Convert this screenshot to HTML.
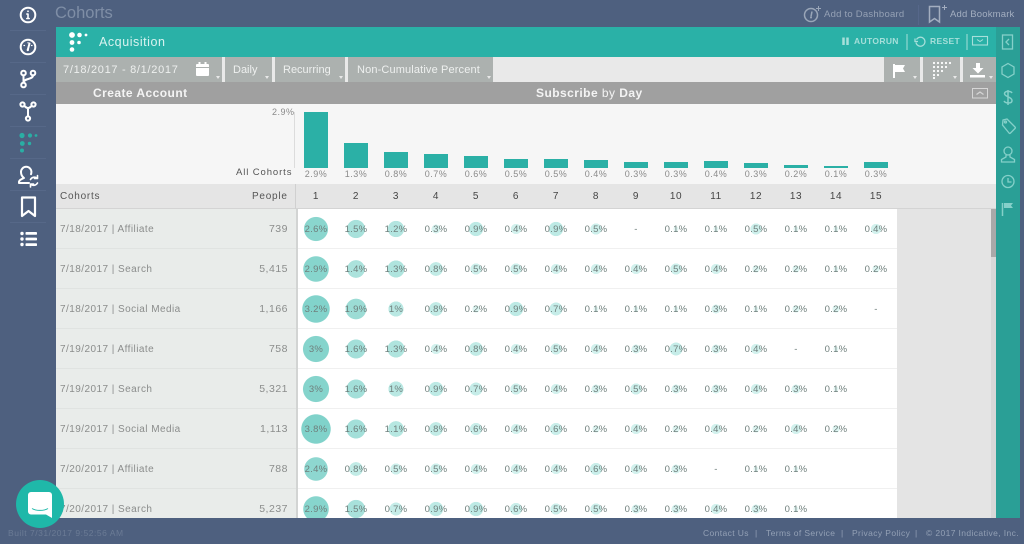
<!DOCTYPE html>
<html><head><meta charset="utf-8"><style>
html,body{margin:0;padding:0}
body{width:1024px;height:544px;overflow:hidden;background:#4e607f;font-family:"Liberation Sans",sans-serif;position:relative}
.a{position:absolute;white-space:nowrap}
svg{position:absolute;overflow:visible}
.sep{position:absolute;left:10px;width:36px;height:1px;background:#566888}
.tb{position:absolute;top:57px;height:25px;background:#acb1af;color:#eef0ef;font-size:11px;line-height:25px}
.tb span{margin-top:1px}
.car{position:absolute;width:0;height:0;border-left:2.5px solid transparent;border-right:2.5px solid transparent;border-top:3px solid #e8e8e8;top:76px}
.bar{position:absolute;width:24px;background:#2bb0a6;bottom:376px}
.bl{position:absolute;top:168px;width:40px;text-align:center;font-size:9px;line-height:12px;color:#8a8a8a;letter-spacing:.5px}
.hn{position:absolute;top:184px;width:40px;height:25px;line-height:25px;text-align:center;font-size:10px;color:#444;letter-spacing:.6px}
.row{position:absolute;left:56px;width:841px;height:40px;background:#fff}
.row b{position:absolute;left:0;top:0;width:240px;height:39px;background:#e9ecea;border-bottom:1px solid #e0e3e1;font-weight:400}
.row u{position:absolute;left:4px;top:0;line-height:41px;font-size:10px;color:#8b8d8c;letter-spacing:.45px;text-decoration:none}
.row s{position:absolute;right:609px;top:0;line-height:41px;font-size:10.5px;color:#8b8d8c;letter-spacing:.5px;text-decoration:none}
.row .l{position:absolute;left:240px;top:0;width:2px;height:40px;background:#d2d4d3}
.row .c{position:absolute;left:240px;top:0;display:flex;height:40px;width:601px;border-bottom:1px solid #f0f0f0;box-sizing:border-box}
.row i{display:block;flex:0 0 40px;height:39px;line-height:41px;text-align:center;font-style:normal;font-size:9.5px;color:#6f7f7c;letter-spacing:.3px;background-repeat:no-repeat}
.v38{background:radial-gradient(circle 15px at 20px 20px,#80d2ca 96%,transparent 100%)}
.v32{background:radial-gradient(circle 14px at 20px 20px,#82d3cb 96%,transparent 100%)}
.v30{background:radial-gradient(circle 13.3px at 20px 20px,#85d4cc 96%,transparent 100%)}
.v29{background:radial-gradient(circle 13px at 20px 20px,#87d5cd 96%,transparent 100%)}
.v26{background:radial-gradient(circle 12.3px at 20px 20px,#8ad6ce 96%,transparent 100%)}
.v24{background:radial-gradient(circle 12px at 20px 20px,#8ed7d0 96%,transparent 100%)}
.v19{background:radial-gradient(circle 10.5px at 20px 20px,#9cdcd5 96%,transparent 100%)}
.v16{background:radial-gradient(circle 9.7px at 20px 20px,#a3dfd9 96%,transparent 100%)}
.v15{background:radial-gradient(circle 9.3px at 20px 20px,#a8e1db 96%,transparent 100%)}
.v14{background:radial-gradient(circle 9px at 20px 20px,#abe2dc 96%,transparent 100%)}
.v13{background:radial-gradient(circle 8.7px at 20px 20px,#afe4de 96%,transparent 100%)}
.v12{background:radial-gradient(circle 8.3px at 20px 20px,#b3e5e0 96%,transparent 100%)}
.v11{background:radial-gradient(circle 8px at 20px 20px,#b6e7e1 96%,transparent 100%)}
.v10{background:radial-gradient(circle 7.7px at 20px 20px,#b9e8e3 96%,transparent 100%)}
.v9{background:radial-gradient(circle 7.3px at 20px 20px,#bdeae5 96%,transparent 100%)}
.v8{background:radial-gradient(circle 7px at 20px 20px,#c1ebe6 96%,transparent 100%)}
.v7{background:radial-gradient(circle 6.6px at 20px 20px,#c5ece8 96%,transparent 100%)}
.v6{background:radial-gradient(circle 6.2px at 20px 20px,#c9eeea 96%,transparent 100%)}
.v5{background:radial-gradient(circle 5.7px at 20px 20px,#cdefeb 96%,transparent 100%)}
.v4{background:radial-gradient(circle 5.2px at 20px 20px,#d2f1ed 96%,transparent 100%)}
.v3{background:radial-gradient(circle 4.5px at 20px 20px,#d8f3f0 96%,transparent 100%)}
.v2{background:radial-gradient(circle 3.7px at 20px 20px,#def5f2 96%,transparent 100%)}
.v1{background:radial-gradient(circle 2.6px at 20px 20px,#e4f7f4 96%,transparent 100%)}
.f{top:527px;font-size:8.5px;line-height:12px;color:#93a0b5;letter-spacing:.38px}
</style></head><body>

<!-- left sidebar -->
<svg style="left:0;top:0" width="56" height="250" fill="none" stroke="#fff" stroke-width="2" stroke-linecap="round" stroke-linejoin="round">
<circle cx="28" cy="15" r="7.3"/><path d="M28 14v4.5M26.800 18.500h2.400M26.800 14H28" stroke-width="1.600"/><circle cx="28" cy="11.300" r=".9" fill="#fff" stroke="none"/>
<circle cx="28" cy="47" r="7.3"/><path d="M29.500 43.500L28 49" stroke-width="2"/><circle cx="27.800" cy="50" r="1.200" fill="#fff" stroke="none"/><path d="M24 45.500h.5M31.500 45.500h.5M28 42.800h.1" stroke-width="1.300"/>
<circle cx="23.500" cy="73" r="2.300"/><circle cx="23.500" cy="85" r="2.300"/><circle cx="33" cy="73" r="2.300"/><path d="M23.500 75.400v7.200M33 75.400c0 4.600-9.500 2.600-9.500 7.200"/>
<circle cx="22.500" cy="104.500" r="2.100"/><circle cx="33.500" cy="104.500" r="2.100"/><circle cx="28" cy="118.500" r="2.100"/><path d="M24.500 106c1.500 1.500 2 2 3.500 2s2-.5 3.500-2M28 108v8.300"/>
<g fill="#2aaea4" stroke="none"><circle cx="22" cy="135.500" r="2.600"/><circle cx="30" cy="135.500" r="2.100"/><circle cx="36" cy="135.500" r="1.400"/><circle cx="22.300" cy="143.500" r="2.400"/><circle cx="29.500" cy="143.500" r="1.700"/><circle cx="22" cy="150.500" r="2"/></g>
<path d="M19 183h10M19 183c-.5-2.500 1.500-3.500 5-5-2-1.500-3-3.500-3-6a5.200 5.200 0 0 1 10.400 0c0 .8-.1 1.500-.4 2.200"/>
<path d="M30.500 179.500a4.500 4.500 0 0 1 6.500-1.500M37.500 175.500v3h-3M37.500 183a4.500 4.500 0 0 1-6.500 1.500M30.500 187v-3h3" stroke-width="1.600"/>
<path d="M22 197.500h13v18.500l-6.500-5-6.500 5z" stroke-width="2.200"/>
<g fill="#fff" stroke="none"><circle cx="22" cy="233.500" r="1.700"/><circle cx="22" cy="239" r="1.700"/><circle cx="22" cy="244.500" r="1.700"/><rect x="25.500" y="232" width="11.500" height="2.800" rx=".8"/><rect x="25.500" y="237.600" width="11.500" height="2.800" rx=".8"/><rect x="25.500" y="243.200" width="11.500" height="2.800" rx=".8"/></g>
</svg>
<div class="sep" style="top:30px"></div><div class="sep" style="top:62px"></div><div class="sep" style="top:94px"></div><div class="sep" style="top:126px"></div><div class="sep" style="top:158px"></div><div class="sep" style="top:190px"></div><div class="sep" style="top:222px"></div>

<!-- top bar -->
<div class="a" style="left:55px;top:2px;font-size:16.500px;line-height:22px;color:#7f8ea6">Cohorts</div>
<svg style="left:800px;top:3px" width="30" height="24" fill="none" stroke="#9aa6b8" stroke-width="1.500"><circle cx="11" cy="12" r="6.500"/><path d="M12 8.500L11 13.500" stroke-width="1.500"/><circle cx="11" cy="14.500" r="1" fill="#9aa6b8" stroke="none"/><path d="M18.500 3v5M16 5.500h5" stroke-width="1"/></svg>
<div class="a" style="left:824px;top:8px;font-size:9.500px;line-height:13px;color:#95a1b5;letter-spacing:.24px">Add to Dashboard</div>
<div class="a" style="left:918px;top:5px;width:1px;height:20px;background:#56678a"></div>
<svg style="left:926px;top:3px" width="24" height="24" fill="none" stroke="#a3aec0" stroke-width="1.500"><path d="M3.500 3.500h10v15.500l-5-3.500-5 3.500z"/><path d="M18.500 2v5M16 4.500h5" stroke-width="1"/></svg>
<div class="a" style="left:950px;top:8px;font-size:9.500px;line-height:13px;color:#a3aec0;letter-spacing:.18px">Add Bookmark</div>

<!-- teal header -->
<div class="a" style="left:56px;top:27px;width:940px;height:30px;background:#2ab1a7"></div>
<svg style="left:56px;top:27px" width="40" height="30" fill="#fff"><circle cx="16" cy="8" r="2.900"/><circle cx="23.500" cy="8" r="2.300"/><circle cx="30" cy="8" r="1.400"/><circle cx="16" cy="15.500" r="2.400"/><circle cx="23" cy="15.500" r="1.800"/><circle cx="16" cy="22.500" r="2.300"/></svg>
<div class="a" style="left:99px;top:34px;font-size:12.500px;line-height:17px;color:#d9f3f0;letter-spacing:.55px">Acquisition</div>
<svg style="left:838px;top:32px" width="150" height="22" fill="none" stroke="#a6dfda"><path d="M5.500 5.500v7.500M9.500 5.500v7.500" stroke-width="2.500"/><path d="M69 2v16M129 2v16" stroke-width="1"/><path d="M78.500 7.500a4.500 4.500 0 1 1-.5 3M77 6.500v3h3" stroke-width="1.300"/><rect x="134.500" y="4.500" width="15" height="8.500" stroke-width="1.100"/><path d="M139 7.500l3 2 3-2" stroke-width="1"/></svg>
<div class="a" style="left:854px;top:35px;font-size:8.500px;line-height:12px;color:#a6dfda;letter-spacing:.35px;font-weight:700">AUTORUN</div>
<div class="a" style="left:930px;top:35px;font-size:8.500px;line-height:12px;color:#a6dfda;letter-spacing:.35px;font-weight:700">RESET</div>

<!-- toolbar -->
<div class="a" style="left:56px;top:57px;width:940px;height:25px;background:#e9e9e9"></div>
<div class="tb" style="left:56px;width:166px"><span class="a" style="left:7px;top:0;letter-spacing:.7px">7/18/2017 - 8/1/2017</span></div>
<div class="tb" style="left:225px;width:47px"><span class="a" style="left:8px;top:0">Daily</span></div>
<div class="tb" style="left:275px;width:70px"><span class="a" style="left:8px;top:0">Recurring</span></div>
<div class="tb" style="left:348px;width:145px"><span class="a" style="left:9px;top:0;letter-spacing:.14px">Non-Cumulative Percent</span></div>
<div class="tb" style="left:884px;width:36px"></div>
<div class="tb" style="left:923px;width:37px"></div>
<div class="tb" style="left:963px;width:33px"></div>
<svg style="left:195px;top:61px" width="16" height="16" fill="#fff"><rect x="1" y="3" width="13" height="12" rx="1"/><rect x="3.500" y="1" width="2" height="3"/><rect x="9.500" y="1" width="2" height="3"/><rect x="1" y="6" width="13" height="1" fill="#acb1af"/></svg>
<div class="car" style="left:216px"></div><div class="car" style="left:265px"></div><div class="car" style="left:339px"></div><div class="car" style="left:487px"></div><div class="car" style="left:913px"></div><div class="car" style="left:953px"></div><div class="car" style="left:989px"></div>
<svg style="left:890px;top:62px" width="16" height="16" fill="#fff"><rect x="3" y="2" width="2" height="14"/><path d="M5 3h10l-2 3.500 2 3.500H5z"/></svg>
<svg style="left:932px;top:60px" width="24" height="20" fill="#fff"><g><circle cx="2" cy="3" r="1.100"/><circle cx="6" cy="3" r="1.100"/><circle cx="10" cy="3" r="1.100"/><circle cx="14" cy="3" r="1.100"/><circle cx="18" cy="3" r="1.100"/><circle cx="2" cy="7" r="1.100"/><circle cx="6" cy="7" r="1.100"/><circle cx="10" cy="7" r="1.100"/><circle cx="14" cy="7" r="1.100"/><circle cx="2" cy="11" r="1.100"/><circle cx="6" cy="11" r="1.100"/><circle cx="10" cy="11" r="1.100"/><circle cx="2" cy="15" r="1.100"/><circle cx="6" cy="15" r="1.100"/><circle cx="2" cy="18" r="1.100"/></g></svg>
<svg style="left:970px;top:63px" width="18" height="16" fill="#fff"><path d="M6 0h4v5h3.500L8 10.500 2.500 5H6z"/><rect x="0" y="12" width="15" height="2.500"/></svg>

<!-- title bar -->
<div class="a" style="left:56px;top:82px;width:940px;height:22px;background:#a0a0a0"></div>
<div class="a" style="left:93px;top:85px;font-size:12px;line-height:16px;font-weight:700;color:#f4f4f4;letter-spacing:.45px">Create Account</div>
<div class="a" style="left:536px;top:85px;font-size:12px;line-height:16px;font-weight:700;color:#f4f4f4;letter-spacing:.45px">Subscribe <span style="font-weight:400">by</span> Day</div>
<svg style="left:972px;top:88px" width="16" height="11" fill="none" stroke="#d6d6d6" stroke-width="1"><rect x=".5" y=".5" width="15" height="9.500"/><path d="M4.500 6.500l3.500-2.500 3.500 2.500" stroke-width="1.200"/></svg>

<!-- chart -->
<div class="a" style="left:56px;top:104px;width:940px;height:80px;background:#f6f6f6"></div>
<div class="a" style="left:294px;top:112px;width:1px;height:56px;background:#dcdcdc"></div>
<div class="a" style="left:272px;top:106px;font-size:9px;line-height:12px;color:#8a8a8a;letter-spacing:.5px">2.9%</div>
<div class="a" style="left:236px;top:166px;font-size:9.500px;line-height:13px;color:#555;letter-spacing:.9px">All Cohorts</div>
<div class="bar" style="left:304px;height:56px"></div><div class="bar" style="left:344px;height:25px"></div><div class="bar" style="left:384px;height:16px"></div><div class="bar" style="left:424px;height:14px"></div><div class="bar" style="left:464px;height:12px"></div><div class="bar" style="left:504px;height:9px"></div><div class="bar" style="left:544px;height:9px"></div><div class="bar" style="left:584px;height:8px"></div><div class="bar" style="left:624px;height:6px"></div><div class="bar" style="left:664px;height:6px"></div><div class="bar" style="left:704px;height:7px"></div><div class="bar" style="left:744px;height:5px"></div><div class="bar" style="left:784px;height:3px"></div><div class="bar" style="left:824px;height:2px"></div><div class="bar" style="left:864px;height:6px"></div>
<div class="bl" style="left:296px">2.9%</div><div class="bl" style="left:336px">1.3%</div><div class="bl" style="left:376px">0.8%</div><div class="bl" style="left:416px">0.7%</div><div class="bl" style="left:456px">0.6%</div><div class="bl" style="left:496px">0.5%</div><div class="bl" style="left:536px">0.5%</div><div class="bl" style="left:576px">0.4%</div><div class="bl" style="left:616px">0.3%</div><div class="bl" style="left:656px">0.3%</div><div class="bl" style="left:696px">0.4%</div><div class="bl" style="left:736px">0.3%</div><div class="bl" style="left:776px">0.2%</div><div class="bl" style="left:816px">0.1%</div><div class="bl" style="left:856px">0.3%</div>

<!-- table header -->
<div class="a" style="left:56px;top:184px;width:940px;height:25px;background:#e5e5e5;border-bottom:1px solid #d4d4d4;box-sizing:border-box"></div>
<div class="a" style="left:295px;top:184px;width:1px;height:25px;background:#d0d0d0"></div>
<div class="a" style="left:60px;top:190px;font-size:10px;line-height:13px;color:#555;letter-spacing:.75px">Cohorts</div>
<div class="a" style="left:252px;top:190px;font-size:10px;line-height:13px;color:#555;letter-spacing:.75px">People</div>
<div class="hn" style="left:296px">1</div><div class="hn" style="left:336px">2</div><div class="hn" style="left:376px">3</div><div class="hn" style="left:416px">4</div><div class="hn" style="left:456px">5</div><div class="hn" style="left:496px">6</div><div class="hn" style="left:536px">7</div><div class="hn" style="left:576px">8</div><div class="hn" style="left:616px">9</div><div class="hn" style="left:656px">10</div><div class="hn" style="left:696px">11</div><div class="hn" style="left:736px">12</div><div class="hn" style="left:776px">13</div><div class="hn" style="left:816px">14</div><div class="hn" style="left:856px">15</div>

<!-- right gray area -->
<div class="a" style="left:897px;top:209px;width:99px;height:309px;background:#e4e4e4"></div>
<div class="a" style="left:991px;top:209px;width:5px;height:309px;background:#d8d8d8"></div>
<div class="a" style="left:991px;top:209px;width:5px;height:48px;background:#a9a9a9"></div>

<!-- rows -->
<div class="row" style="top:209px"><b><u>7/18/2017 | Affiliate</u></b><s>739</s><div class="c"><i class="v26">2.6%</i><i class="v15">1.5%</i><i class="v12">1.2%</i><i class="v3">0.3%</i><i class="v9">0.9%</i><i class="v4">0.4%</i><i class="v9">0.9%</i><i class="v5">0.5%</i><i>-</i><i class="v1">0.1%</i><i class="v1">0.1%</i><i class="v5">0.5%</i><i class="v1">0.1%</i><i class="v1">0.1%</i><i class="v4">0.4%</i></div><div class="l"></div></div>
<div class="row" style="top:249px"><b><u>7/18/2017 | Search</u></b><s>5,415</s><div class="c"><i class="v29">2.9%</i><i class="v14">1.4%</i><i class="v13">1.3%</i><i class="v8">0.8%</i><i class="v5">0.5%</i><i class="v5">0.5%</i><i class="v4">0.4%</i><i class="v4">0.4%</i><i class="v4">0.4%</i><i class="v5">0.5%</i><i class="v4">0.4%</i><i class="v2">0.2%</i><i class="v2">0.2%</i><i class="v1">0.1%</i><i class="v2">0.2%</i></div><div class="l"></div></div>
<div class="row" style="top:289px"><b><u>7/18/2017 | Social Media</u></b><s>1,166</s><div class="c"><i class="v32">3.2%</i><i class="v19">1.9%</i><i class="v10">1%</i><i class="v8">0.8%</i><i class="v2">0.2%</i><i class="v9">0.9%</i><i class="v7">0.7%</i><i class="v1">0.1%</i><i class="v1">0.1%</i><i class="v1">0.1%</i><i class="v3">0.3%</i><i class="v1">0.1%</i><i class="v2">0.2%</i><i class="v2">0.2%</i><i>-</i></div><div class="l"></div></div>
<div class="row" style="top:329px"><b><u>7/19/2017 | Affiliate</u></b><s>758</s><div class="c"><i class="v30">3%</i><i class="v16">1.6%</i><i class="v13">1.3%</i><i class="v4">0.4%</i><i class="v8">0.8%</i><i class="v4">0.4%</i><i class="v5">0.5%</i><i class="v4">0.4%</i><i class="v3">0.3%</i><i class="v7">0.7%</i><i class="v3">0.3%</i><i class="v4">0.4%</i><i>-</i><i class="v1">0.1%</i><i></i></div><div class="l"></div></div>
<div class="row" style="top:369px"><b><u>7/19/2017 | Search</u></b><s>5,321</s><div class="c"><i class="v30">3%</i><i class="v16">1.6%</i><i class="v10">1%</i><i class="v9">0.9%</i><i class="v7">0.7%</i><i class="v5">0.5%</i><i class="v4">0.4%</i><i class="v3">0.3%</i><i class="v5">0.5%</i><i class="v3">0.3%</i><i class="v3">0.3%</i><i class="v4">0.4%</i><i class="v3">0.3%</i><i class="v1">0.1%</i><i></i></div><div class="l"></div></div>
<div class="row" style="top:409px"><b><u>7/19/2017 | Social Media</u></b><s>1,113</s><div class="c"><i class="v38">3.8%</i><i class="v16">1.6%</i><i class="v11">1.1%</i><i class="v8">0.8%</i><i class="v6">0.6%</i><i class="v4">0.4%</i><i class="v6">0.6%</i><i class="v2">0.2%</i><i class="v4">0.4%</i><i class="v2">0.2%</i><i class="v4">0.4%</i><i class="v2">0.2%</i><i class="v4">0.4%</i><i class="v2">0.2%</i><i></i></div><div class="l"></div></div>
<div class="row" style="top:449px"><b><u>7/20/2017 | Affiliate</u></b><s>788</s><div class="c"><i class="v24">2.4%</i><i class="v8">0.8%</i><i class="v5">0.5%</i><i class="v5">0.5%</i><i class="v4">0.4%</i><i class="v4">0.4%</i><i class="v4">0.4%</i><i class="v6">0.6%</i><i class="v4">0.4%</i><i class="v3">0.3%</i><i>-</i><i class="v1">0.1%</i><i class="v1">0.1%</i><i></i><i></i></div><div class="l"></div></div>
<div class="row" style="top:489px;height:29px;overflow:hidden"><b><u>7/20/2017 | Search</u></b><s>5,237</s><div class="c"><i class="v29">2.9%</i><i class="v15">1.5%</i><i class="v7">0.7%</i><i class="v9">0.9%</i><i class="v9">0.9%</i><i class="v6">0.6%</i><i class="v5">0.5%</i><i class="v5">0.5%</i><i class="v3">0.3%</i><i class="v3">0.3%</i><i class="v4">0.4%</i><i class="v3">0.3%</i><i class="v1">0.1%</i><i></i><i></i></div><div class="l"></div></div>

<!-- right rail -->
<div class="a" style="left:996px;top:27px;width:24px;height:491px;background:#2a9f96"></div>
<svg style="left:996px;top:27px" width="24" height="190" fill="none" stroke="#85d0c9" stroke-width="1.300">
<rect x="6.500" y="8" width="10" height="14"/><path d="M13 12l-3 3 3 3"/>
<path d="M12 36.500l6 3.500v7l-6 3.500-6-3.500v-7z"/>
<path d="M16 66c-1-2-7-2.500-7.500.5S16 70 16 73.500s-6.500 3-8 .5M12 63v15" stroke-width="1.500"/>
<path d="M7 93l4-1 8 8c.5.500.5 1 0 1.500l-4.500 4.500c-.5.500-1 .5-1.500 0l-6.500-8z"/><circle cx="9.500" cy="95" r="1"/>
<circle cx="12" cy="124" r="4"/><path d="M10 128v2l-4.500 2.500V135h13v-2.500L14 130v-2"/>
<circle cx="12" cy="154.500" r="6"/><path d="M12 151v4h3.500"/>
<path d="M6.500 176v13" stroke-width="1.500"/>
<path d="M8 176h9l-2 2.500 2 2.500H8z" fill="#85d0c9" stroke="none"/>
</svg>

<!-- chat -->
<div class="a" style="left:16px;top:480px;width:48px;height:48px;border-radius:50%;background:#1fb8a9"></div>
<svg style="left:28px;top:492px" width="24" height="26"><path d="M3 0h18a3 3 0 0 1 3 3v23l-6-3.500H3a3 3 0 0 1-3-3V3a3 3 0 0 1 3-3z" fill="#fff"/><path d="M4 16.500c4 2.500 12 2.500 16 0" fill="none" stroke="#1fb8a9" stroke-width="1"/></svg>

<!-- footer -->
<div class="a" style="left:8px;top:527px;font-size:8.500px;line-height:12px;color:#6b7b95;letter-spacing:.52px">Built 7/31/2017 9:52:56 AM</div>
<div class="a f" style="left:703px">Contact Us</div><div class="a f" style="left:755px">|</div>
<div class="a f" style="left:766px">Terms of Service</div><div class="a f" style="left:841px">|</div>
<div class="a f" style="left:852px">Privacy Policy</div><div class="a f" style="left:915px">|</div>
<div class="a f" style="left:926px">© 2017 Indicative, Inc.</div>
</body></html>
